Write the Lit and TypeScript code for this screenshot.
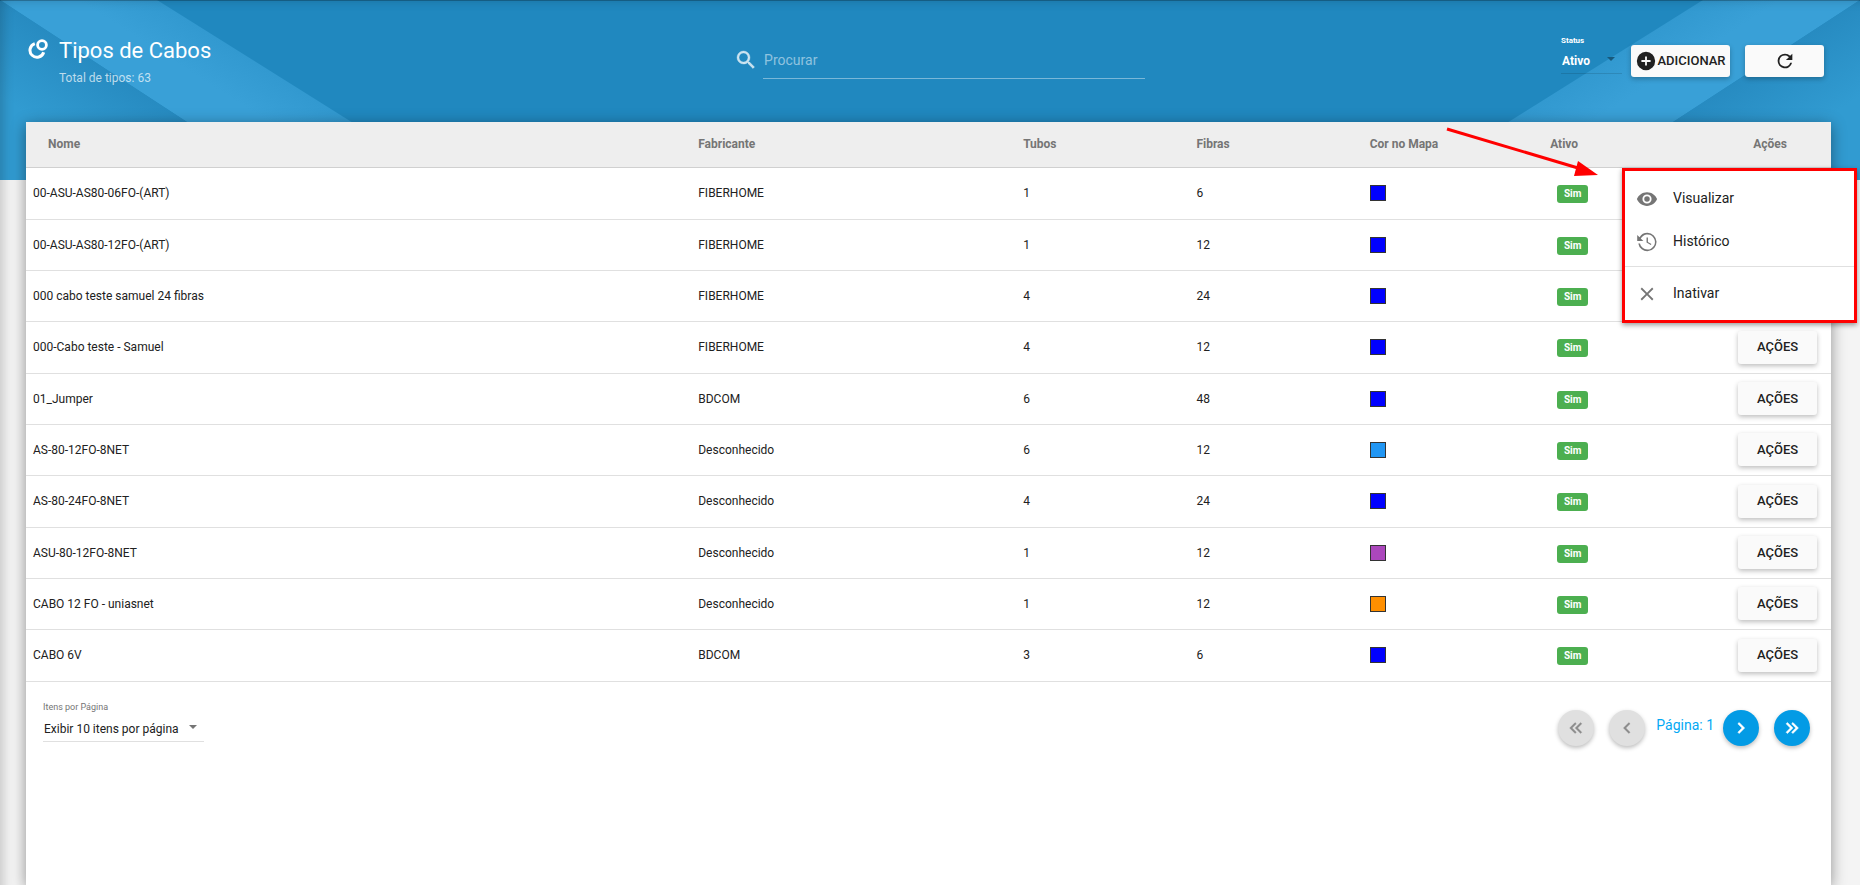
import { LitElement, html, css } from "lit";
import { customElement, state } from "lit/decorators.js";

interface Cable {
  name: string;
  maker: string;
  tubes: number;
  fibers: number;
  color: string;
}

const CABLES: Cable[] = [
  { name: "00-ASU-AS80-06FO-(ART)", maker: "FIBERHOME", tubes: 1, fibers: 6, color: "#0000ff" },
  { name: "00-ASU-AS80-12FO-(ART)", maker: "FIBERHOME", tubes: 1, fibers: 12, color: "#0000ff" },
  { name: "000 cabo teste samuel 24 fibras", maker: "FIBERHOME", tubes: 4, fibers: 24, color: "#0000ff" },
  { name: "000-Cabo teste - Samuel", maker: "FIBERHOME", tubes: 4, fibers: 12, color: "#0000ff" },
  { name: "01_Jumper", maker: "BDCOM", tubes: 6, fibers: 48, color: "#0000ff" },
  { name: "AS-80-12FO-8NET", maker: "Desconhecido", tubes: 6, fibers: 12, color: "#2196f3" },
  { name: "AS-80-24FO-8NET", maker: "Desconhecido", tubes: 4, fibers: 24, color: "#0000ff" },
  { name: "ASU-80-12FO-8NET", maker: "Desconhecido", tubes: 1, fibers: 12, color: "#ab47bc" },
  { name: "CABO 12 FO - uniasnet", maker: "Desconhecido", tubes: 1, fibers: 12, color: "#ff8f00" },
  { name: "CABO 6V", maker: "BDCOM", tubes: 3, fibers: 6, color: "#0000ff" },
];

const icon = (path: string) =>
  html`<svg class="icon" viewBox="0 0 24 24" aria-hidden="true"><path d=${path}></path></svg>`;

const ICONS = {
  search:
    "M15.5 14h-.79l-.28-.27A6.47 6.47 0 0 0 16 9.5 6.5 6.5 0 1 0 9.5 16c1.61 0 3.09-.59 4.23-1.57l.27.28v.79l5 4.99L20.49 19l-4.99-5zm-6 0a4.5 4.5 0 1 1 0-9 4.5 4.5 0 0 1 0 9z",
  add: "M12 2a10 10 0 1 0 0 20 10 10 0 0 0 0-20zm5 11h-4v4h-2v-4H7v-2h4V7h2v4h4v2z",
  refresh:
    "M17.65 6.35A7.96 7.96 0 0 0 12 4a8 8 0 1 0 7.73 10h-2.08A6 6 0 1 1 12 6c1.66 0 3.14.69 4.22 1.78L13 11h7V4l-2.35 2.35z",
  eye: "M12 4.5C7 4.5 2.73 7.61 1 12c1.73 4.39 6 7.5 11 7.5s9.27-3.11 11-7.5c-1.73-4.39-6-7.5-11-7.5zM12 17a5 5 0 1 1 0-10 5 5 0 0 1 0 10zm0-8a3 3 0 1 0 0 6 3 3 0 0 0 0-6z",
  history:
    "M11.5 7v5.6l4.6 2.8.75-1.2-3.85-2.3V7zM12.5 2a10 10 0 0 0-8.6 4.9L1.3 4.3V11H8L5.2 8.2A8.2 8.2 0 1 1 4.4 13.500H2.500A10 10 0 1 0 12.500 2z",
  close: "M19 6.41 17.59 5 12 10.59 6.41 5 5 6.41 10.59 12 5 17.59 6.41 19 12 13.41 17.59 19 19 17.59 13.41 12z",
  first: "M18.41 7.41 17 6l-6 6 6 6 1.41-1.41L13.83 12zM12.41 7.41 11 6l-6 6 6 6 1.41-1.41L7.83 12z",
  prev: "M15.41 7.41 14 6l-6 6 6 6 1.41-1.41L10.83 12z",
  next: "M10 6 8.59 7.41 13.17 12l-4.58 4.59L10 18l6-6z",
  last: "M5.59 7.41 7 6l6 6-6 6-1.41-1.41L10.17 12zM11.59 7.41 13 6l6 6-6 6-1.41-1.41L16.17 12z",
};

@customElement("app-root")
export class AppRoot extends LitElement {
  @state() private cables = CABLES;

  static styles = css`
    :host {
      display: block;
      position: relative;
      min-height: 100vh;
      overflow: hidden;
      background: #f4f4f4;
      color: #212121;
      font-family: Roboto, "Liberation Sans", sans-serif;
      font-size: 12px;
      line-height: 16px;
    }
    * {
      box-sizing: border-box;
    }
    button,
    input,
    select {
      font: inherit;
      color: inherit;
    }
    button {
      border: 0;
      cursor: pointer;
    }
    .edge {
      position: absolute;
      inset: 0 -24px -24px 0;
      pointer-events: none;
      box-shadow: inset 3px 0 12px rgba(0, 0, 0, 0.2), inset 0 1px 0 rgba(0, 0, 0, 0.24);
    }
    .backdrop {
      position: absolute;
      top: 0;
      left: 0;
      right: 0;
      height: 180px;
      display: flex;
      justify-content: space-between;
      background: #2088bf;
      overflow: hidden;
    }
    .fold {
      width: 444px;
      height: 180px;
    }
    .fold.flip {
      transform: scaleX(-1);
    }
    .toolbar {
      position: relative;
      display: grid;
      grid-template-columns: 26fr 411px 25fr;
      height: 122px;
      padding: 0 36px 0 28px;
    }
    .brand {
      display: flex;
      gap: 11px;
      padding-top: 37px;
      color: #fff;
    }
    .brand svg {
      width: 20px;
      height: 20px;
      margin-top: 2px;
    }
    h1 {
      margin: 0;
      font-size: 22px;
      line-height: 28px;
      font-weight: 400;
    }
    .total {
      margin: 5px 0 0;
      color: rgba(255, 255, 255, 0.7);
    }
    .search {
      display: flex;
      gap: 5px;
      padding-top: 41px;
    }
    .search .icon {
      width: 24px;
      height: 24px;
      margin-top: 7px;
      fill: rgba(255, 255, 255, 0.75);
      stroke: rgba(255, 255, 255, 0.5);
      stroke-width: 0.6;
    }
    .search input {
      flex: 1;
      min-width: 0;
      height: 38px;
      padding: 0 0 0 1px;
      border: 0;
      border-bottom: 1px solid rgba(255, 255, 255, 0.4);
      outline: 0;
      background: none;
      color: #fff;
      font-size: 14px;
    }
    .search input::placeholder {
      color: rgba(255, 255, 255, 0.5);
    }
    .tools {
      display: flex;
      justify-content: flex-end;
    }
    .status {
      width: 61px;
      margin: 36px 9px 0 0;
      color: #fff;
      font-weight: 700;
    }
    .status label {
      display: block;
      font-size: 8px;
      line-height: 10px;
    }
    .picker {
      position: relative;
      display: block;
    }
    .picker::after {
      content: "";
      position: absolute;
      right: 7px;
      top: 50%;
      margin-top: -3px;
      border: 4px solid transparent;
      border-top-color: currentColor;
      border-bottom: 0;
      pointer-events: none;
    }
    .picker select {
      appearance: none;
      width: 100%;
      height: 28px;
      padding: 2px 0 0 1px;
      border: 0;
      border-bottom: 1px solid rgba(0, 0, 0, 0.12);
      border-radius: 0;
      outline: 0;
      background: none;
    }
    .status .picker::after {
      border-top-color: #17597c;
    }
    .raised {
      height: 32px;
      padding: 0;
      border-radius: 3px;
      background: #fafafa;
      box-shadow: 0 2px 5px rgba(0, 0, 0, 0.26);
      font-size: 13px;
      font-weight: 500;
      text-transform: uppercase;
    }
    .raised .icon {
      width: 22px;
      height: 22px;
      fill: #212121;
    }
    .add {
      display: flex;
      align-items: center;
      justify-content: center;
      width: 99px;
      margin-top: 45px;
    }
    .reload {
      display: flex;
      align-items: center;
      justify-content: center;
      width: 79px;
      margin: 45px 0 0 15px;
    }
    .card {
      position: relative;
      min-height: calc(100vh - 122px);
      margin: 0 29px 0 26px;
      background: #fff;
      box-shadow: 0 3px 14px rgba(0, 0, 0, 0.42);
    }
    table {
      width: 100%;
      table-layout: fixed;
      border-collapse: separate;
      border-spacing: 0;
    }
    th {
      height: 46px;
      padding: 0 8px 2px;
      background: #eee;
      border-bottom: 1px solid #d0d0d0;
      color: #757575;
      font-weight: 700;
      text-align: left;
    }
    .c-name {
      width: 36.8%;
    }
    .c-maker {
      width: 18%;
    }
    .c-num {
      width: 9.6%;
    }
    .c-tag {
      width: 10%;
    }
    th.c-name {
      padding-left: 22px;
    }
    th.c-act {
      padding-right: 44px;
      text-align: right;
    }
    td {
      height: 51px;
      padding: 0 8px 1px;
      border-bottom: 1px solid #e0e0e0;
    }
    td:first-child {
      padding-left: 7px;
    }
    tbody tr:nth-child(3n + 1) td {
      height: 52px;
    }
    td.act {
      padding-right: 14px;
      text-align: right;
    }
    .swatch {
      display: block;
      width: 16px;
      height: 16px;
      border: 1px solid #333;
    }
    .badge {
      display: block;
      width: 31px;
      margin: 2px 0 0 7px;
      border-radius: 3px;
      background: #4caf50;
      color: #fff;
      font-size: 10px;
      line-height: 18px;
      font-weight: 700;
      text-align: center;
    }
    td .raised {
      width: 79px;
      height: 33px;
      display: inline-block;
      vertical-align: middle;
    }
    .footer {
      display: flex;
      justify-content: space-between;
      padding: 18px 21px 0 17px;
    }
    .perpage {
      width: 161px;
    }
    .perpage label {
      display: block;
      color: #757575;
      font-size: 9px;
      line-height: 14px;
    }
    .perpage .picker::after {
      border-top-color: #757575;
    }
    .pager {
      display: flex;
      gap: 15px;
      padding-top: 10px;
    }
    .round {
      width: 36px;
      height: 36px;
      padding: 7px;
      border-radius: 50%;
      background: #039be5;
      box-shadow: 0 2px 4px rgba(0, 0, 0, 0.26);
      fill: #fff;
      stroke: #fff;
      stroke-width: 0.6;
    }
    .round:disabled {
      background: #e0e0e0;
      fill: #8c8c8c;
      stroke: #8c8c8c;
      stroke-width: 0.3;
    }
    .round .icon {
      display: block;
      width: 22px;
      height: 22px;
    }
    .page {
      margin: 0 -6px 0 -4px;
      color: #03a9f4;
      font-size: 14px;
      line-height: 30px;
    }
    .menu {
      position: absolute;
      top: 46px;
      right: -26px;
      width: 235px;
      padding: 5px 0 6px;
      background: #fff;
      border: 3px solid #f00;
      box-shadow: 0 2px 5px rgba(0, 0, 0, 0.4);
    }
    .menu button {
      display: flex;
      align-items: center;
      gap: 15px;
      width: 100%;
      height: 43px;
      padding: 0 11px;
      background: none;
      font-size: 14px;
    }
    .menu .icon {
      width: 22px;
      height: 22px;
      margin-top: 2px;
      fill: #757575;
    }
    .menu hr {
      height: 1px;
      margin: 4px 0;
      border: 0;
      background: #e0e0e0;
    }
    .arrow {
      position: absolute;
      top: 0;
      right: 229px;
      width: 160px;
      height: 60px;
    }
  `;

  private fold(id: string, flip: boolean) {
    return html`<svg class="fold ${flip ? "flip" : ""}" viewBox="0 0 444 180">
      <defs>
        <linearGradient id="${id}a" gradientUnits="userSpaceOnUse" x1="0" y1="0" x2="-44" y2="68">
          <stop offset="0" stop-color="#278bc1"></stop>
          <stop offset="1" stop-color="#319bd1"></stop>
        </linearGradient>
        <linearGradient id="${id}b" gradientUnits="userSpaceOnUse" x1="157" y1="0" x2="134" y2="36">
          <stop offset="0" stop-color="#3299d0"></stop>
          <stop offset="1" stop-color="#39a0d7"></stop>
        </linearGradient>
      </defs>
      <path d="M0 0H157L444 180H276z" fill="url(#${id}b)"></path>
      <path d="M0 0L276 180H0z" fill="url(#${id}a)"></path>
    </svg>`;
  }

  render() {
    return html`
      <div class="backdrop" aria-hidden="true">${this.fold("l", false)}${this.fold("r", true)}</div>
      <div class="edge"></div>
      <header class="toolbar">
        <div class="brand">
          <svg viewBox="0 0 20 20" fill="none" stroke="#fff" aria-hidden="true">
            <path d="M6.800 4.600A7 7 0 1 0 15.700 13.300" stroke-width="3"></path>
            <circle cx="14" cy="6" r="4.400" stroke-width="2.800"></circle>
          </svg>
          <div>
            <h1>Tipos de Cabos</h1>
            <p class="total">Total de tipos: 63</p>
          </div>
        </div>
        <div class="search">
          ${icon(ICONS.search)}
          <input type="text" placeholder="Procurar" aria-label="Procurar" />
        </div>
        <div class="tools">
          <div class="status">
            <label for="status">Status</label>
            <span class="picker"><select id="status"><option>Ativo</option><option>Inativo</option></select></span>
          </div>
          <button class="raised add">${icon(ICONS.add)}Adicionar</button>
          <button class="raised reload" aria-label="Atualizar">${icon(ICONS.refresh)}</button>
        </div>
      </header>
      <main class="card">
        <table>
          <thead>
            <tr>
              <th class="c-name">Nome</th>
              <th class="c-maker">Fabricante</th>
              <th class="c-num">Tubos</th>
              <th class="c-num">Fibras</th>
              <th class="c-tag">Cor no Mapa</th>
              <th class="c-tag">Ativo</th>
              <th class="c-act">Ações</th>
            </tr>
          </thead>
          <tbody>
            ${this.cables.map(
              (c) => html`<tr>
                <td>${c.name}</td>
                <td>${c.maker}</td>
                <td>${c.tubes}</td>
                <td>${c.fibers}</td>
                <td><span class="swatch" style="background:${c.color}"></span></td>
                <td><span class="badge">Sim</span></td>
                <td class="act"><button class="raised">Ações</button></td>
              </tr>`
            )}
          </tbody>
        </table>
        <div class="footer">
          <div class="perpage">
            <label for="perpage">Itens por Página</label>
            <span class="picker"><select id="perpage"><option>Exibir 10 itens por página</option></select></span>
          </div>
          <nav class="pager">
            <button class="round" disabled aria-label="Primeira">${icon(ICONS.first)}</button>
            <button class="round" disabled aria-label="Anterior">${icon(ICONS.prev)}</button>
            <span class="page">Página: 1</span>
            <button class="round" aria-label="Próxima">${icon(ICONS.next)}</button>
            <button class="round" aria-label="Última">${icon(ICONS.last)}</button>
          </nav>
        </div>
        <div class="menu">
          <button>${icon(ICONS.eye)}Visualizar</button>
          <button>${icon(ICONS.history)}Histórico</button>
          <hr />
          <button>${icon(ICONS.close)}Inativar</button>
        </div>
        <svg class="arrow" viewBox="0 0 160 60" aria-hidden="true">
          <path d="M5 7L136 46" stroke="#f00" stroke-width="3"></path>
          <path d="M136 39L156 53L132 54z" fill="#f00"></path>
        </svg>
      </main>
    `;
  }
}
